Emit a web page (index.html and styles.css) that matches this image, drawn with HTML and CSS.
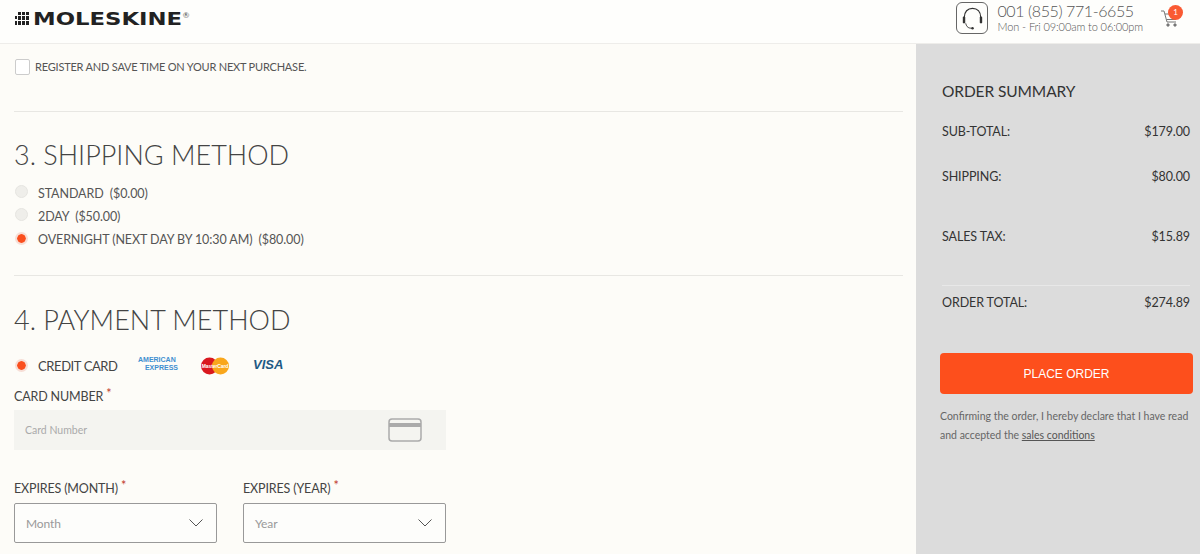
FILE: index.html
```html
<!DOCTYPE html>
<html lang="en">
<head>
    <meta charset="UTF-8">
    <title>Moleskine - Checkout</title>
    <link rel="stylesheet" href="styles.css">
</head>
<body>
    <header class="top-bar">
        <div class="logo">
            <svg class="logo-grid" width="14" height="13" viewBox="0 0 14 13">
                <g fill="#222">
                    <rect x="0" y="4" width="2" height="3"/><rect x="3" y="0" width="3" height="3"/><rect x="7" y="0" width="3" height="3"/><rect x="11" y="0" width="3" height="3"/>
                    <rect x="3" y="4" width="3" height="4"/><rect x="7" y="4" width="3" height="4"/><rect x="11" y="4" width="3" height="4"/>
                    <rect x="0" y="9" width="2" height="4"/><rect x="3" y="9" width="3" height="4"/><rect x="7" y="9" width="3" height="4"/><rect x="11" y="9" width="3" height="4"/>
                </g>
            </svg>
            <span class="logo-text">MOLESKINE</span><span class="logo-reg">®</span>
        </div>
        <div class="contact">
            <div class="headset-box">
                <svg width="31" height="31" viewBox="0 0 32 32" fill="none" stroke="#333">
                    <path d="M7.500 15 C7.500 9 11 5.500 16 5.500 C21 5.500 24.500 9 24.500 15" stroke-width="1.200"/>
                    <rect x="6" y="14" width="2.500" height="7" rx="1" fill="#333" stroke="none"/>
                    <rect x="23.500" y="14" width="2.500" height="7" rx="1" fill="#333" stroke="none"/>
                    <path d="M9 21 C10 25 12 26 15 26" stroke-width="1"/>
                    <circle cx="16" cy="26" r="1.300" fill="#333" stroke="none"/>
                </svg>
            </div>
            <div class="phone">
                <div class="phone-number">001 (855) 771-6655</div>
                <div class="phone-hours">Mon - Fri 09:00am to 06:00pm</div>
            </div>
            <div class="cart">
                <svg width="20" height="20" viewBox="0 0 20 20" fill="none" stroke="#777" stroke-width="1">
                    <path d="M1 3 H4 L7 14 H16"/>
                    <path d="M5 6 H17 L15.500 11.500 H6.500"/>
                    <circle cx="8" cy="17" r="1.200" fill="#777"/>
                    <circle cx="15" cy="17" r="1.200" fill="#777"/>
                </svg>
                <span class="cart-badge">1</span>
            </div>
        </div>
    </header>

    <div class="page">
        <main class="checkout">
            <label class="register">
                <span class="checkbox"></span>
                REGISTER AND SAVE TIME ON YOUR NEXT PURCHASE.
            </label>

            <section class="step shipping">
                <h2>3. SHIPPING METHOD</h2>
                <div class="radio-row"><span class="radio"></span>STANDARD&nbsp; ($0.00)</div>
                <div class="radio-row"><span class="radio"></span>2DAY&nbsp; ($50.00)</div>
                <div class="radio-row"><span class="radio selected"></span>OVERNIGHT (NEXT DAY BY 10:30 AM)&nbsp; ($80.00)</div>
            </section>

            <section class="step payment">
                <h2>4. PAYMENT METHOD</h2>
                <div class="card-row">
                    <span class="radio selected"></span>
                    <span class="card-label">CREDIT CARD</span>
                    <span class="amex"><span>AMERICAN</span><span class="amex-low">EXPRESS</span></span>
                    <span class="mastercard">
                        <svg width="30" height="18" viewBox="0 0 30 18">
                            <circle cx="9.500" cy="9" r="8.500" fill="#d9181f"/>
                            <circle cx="20.500" cy="9" r="8.500" fill="#f9a71c"/>
                            <text x="15" y="11" text-anchor="middle" class="mc-text">MasterCard</text>
                        </svg>
                    </span>
                    <span class="visa">VISA</span>
                </div>

                <div class="field-label">CARD NUMBER <span class="req">*</span></div>
                <div class="card-input">
                    <span>Card Number</span>
                    <svg width="34" height="24" viewBox="0 0 34 24" fill="none" stroke="#aaa" stroke-width="1.500">
                        <rect x="1" y="1" width="32" height="22" rx="3"/>
                        <rect x="1" y="5" width="32" height="4" fill="#aaa" stroke="none"/>
                    </svg>
                </div>

                <div class="expires">
                    <div class="expires-col">
                        <div class="field-label">EXPIRES (MONTH) <span class="req">*</span></div>
                        <div class="select-box">
                            <span>Month</span>
                            <svg width="14" height="8" viewBox="0 0 14 8" fill="none" stroke="#555" stroke-width="1"><path d="M0.500 0.500 L7 7 L13.500 0.500"/></svg>
                        </div>
                    </div>
                    <div class="expires-col">
                        <div class="field-label">EXPIRES (YEAR) <span class="req">*</span></div>
                        <div class="select-box">
                            <span>Year</span>
                            <svg width="14" height="8" viewBox="0 0 14 8" fill="none" stroke="#555" stroke-width="1"><path d="M0.500 0.500 L7 7 L13.500 0.500"/></svg>
                        </div>
                    </div>
                </div>
            </section>
        </main>

        <aside class="summary">
            <h3>ORDER SUMMARY</h3>
            <div class="sum-row subtotal"><span>SUB-TOTAL:</span><span>$179.00</span></div>
            <div class="sum-row ship"><span>SHIPPING:</span><span>$80.00</span></div>
            <div class="sum-row tax"><span>SALES TAX:</span><span>$15.89</span></div>
            <div class="sum-row total"><span>ORDER TOTAL:</span><span>$274.89</span></div>
            <button class="place-order">PLACE ORDER</button>
            <p class="terms">Confirming the order, I hereby declare that I have read and accepted the <a href="#">sales conditions</a></p>
        </aside>
    </div>
</body>
</html>
```

FILE: styles.css
```css
* {
    box-sizing: border-box;
}
html, body {
    height: 100%;
}
body {
    margin: 0;
    overflow: hidden;
    background: #fdfcf8;
    color: #444;
    font-family: Lato, "Open Sans", sans-serif;
    font-size: 12.5px;
    letter-spacing: -0.1px;
}

/* header */
.top-bar {
    display: flex;
    justify-content: space-between;
    height: 44px;
    padding: 0 20px 0 15px;
    background: #fefefc;
    border-bottom: 1px solid #eeedea;
}
.logo {
    display: flex;
    align-items: flex-start;
    padding-top: 10px;
}
.logo-grid {
    margin-top: 2px;
}
.logo-text {
    margin: 0 35px 0 4px;
    font-family: "DejaVu Sans", sans-serif;
    font-size: 17.5px;
    font-weight: bold;
    line-height: 18px;
    letter-spacing: 0;
    color: #222;
    transform: scaleX(1.3);
    transform-origin: left center;
}
.logo-reg {
    font-size: 8px;
    color: #555;
    line-height: 10px;
}
.contact {
    display: flex;
    align-items: flex-start;
}
.headset-box {
    width: 32px;
    height: 32px;
    margin-top: 2px;
    border: 1px solid #666;
    border-radius: 6px;
    overflow: hidden;
}
.headset-box svg {
    display: block;
}
.phone {
    margin-left: 9px;
    color: #555;
}
.phone-number {
    font-size: 16px;
    font-weight: 300;
    line-height: 20px;
    margin-top: 1px;
    letter-spacing: -0.4px;
}
.phone-hours {
    font-size: 11px;
    line-height: 12px;
    font-weight: 300;
}
.cart {
    position: relative;
    margin-left: 17px;
    padding-top: 8px;
}
.cart-badge {
    position: absolute;
    top: 5px;
    left: 8px;
    width: 15px;
    height: 15px;
    border-radius: 50%;
    background: #fa5a33;
    color: #fff;
    font-size: 8px;
    line-height: 15px;
    text-align: center;
}

/* columns */
.page {
    display: flex;
    height: 510px;
}
.checkout {
    width: 916px;
    padding: 14px 13px 0 14px;
}
.summary {
    width: 284px;
    padding: 37px 10px 0 26px;
    background: #dcdcdc;
}

.register {
    display: flex;
    align-items: center;
    height: 17px;
    font-size: 11px;
    letter-spacing: -0.2px;
    color: #555;
}
.checkbox {
    width: 15px;
    height: 16px;
    margin: 0 5px 0 1px;
    background: #fff;
    border: 1px solid #ccc;
    border-radius: 2px;
}
.step {
    border-top: 1px solid #e8e7e3;
}
.step h2 {
    margin: 0;
    font-size: 27px;
    font-weight: 300;
    line-height: 36px;
    letter-spacing: 0;
    color: #444;
}
.shipping {
    margin-top: 36px;
    padding-top: 25px;
    padding-bottom: 24px;
}
.shipping h2 {
    margin-bottom: 9px;
}
.radio-row {
    display: flex;
    align-items: center;
    height: 23px;
    color: #555;
}
.radio {
    flex: none;
    width: 13px;
    height: 13px;
    margin: 0 10px 4px 1px;
    border-radius: 50%;
    background: #efeeea;
    border: 1px solid #e6e5e1;
}
.radio.selected {
    margin-bottom: 2px;
    background: #fa4f1e;
    border: 2px solid #f7ded6;
    background-clip: padding-box;
}
.payment {
    padding-top: 26px;
}
.card-row {
    display: flex;
    align-items: center;
    height: 22px;
    margin-top: 17px;
    color: #444;
}
.card-label {
    width: 100px;
    font-size: 13px;
    letter-spacing: -0.4px;
}
.amex {
    display: flex;
    flex-direction: column;
    width: 40px;
    font-family: "Liberation Sans", sans-serif;
    font-size: 7px;
    font-weight: bold;
    line-height: 8px;
    letter-spacing: 0;
    color: #3f8fd0;
    margin-top: -4px;
}
.amex-low {
    align-self: flex-end;
}
.mastercard {
    display: flex;
    margin-left: 22px;
}
.mc-text {
    font-family: "Liberation Sans", sans-serif;
    font-size: 5px;
    font-weight: bold;
    fill: #fff;
}
.visa {
    margin-left: 23px;
    font-family: "Liberation Sans", sans-serif;
    font-size: 13px;
    font-style: italic;
    font-weight: bold;
    letter-spacing: 0;
    color: #1d5a85;
    margin-top: -4px;
}
.field-label {
    line-height: 18px;
    letter-spacing: -0.15px;
    color: #444;
}
.req {
    color: #c0392b;
    vertical-align: 3px;
}
.payment > .field-label {
    margin-top: 8px;
}
.card-input {
    display: flex;
    align-items: center;
    justify-content: space-between;
    width: 432px;
    height: 40px;
    margin-top: 4px;
    padding: 0 24px 0 11px;
    background: #f4f4f0;
    color: #aaa;
    font-size: 10.5px;
    letter-spacing: 0;
}
.expires {
    display: flex;
    gap: 26px;
    margin-top: 27px;
}
.expires-col {
    width: 203px;
}
.select-box {
    display: flex;
    align-items: center;
    justify-content: space-between;
    height: 40px;
    margin-top: 5px;
    padding: 0 13px 0 11px;
    background: #fdfdfb;
    border: 1px solid #999;
    border-radius: 2px;
    color: #999;
    font-size: 12px;
}

/* order summary */
.summary h3 {
    margin: 0 0 22px;
    font-size: 15.5px;
    font-weight: 400;
    line-height: 20px;
    letter-spacing: -0.1px;
    color: #333;
}
.sum-row {
    display: flex;
    justify-content: space-between;
    line-height: 18px;
    color: #333;
}
.ship {
    margin-top: 27px;
}
.tax {
    margin-top: 42px;
}
.total {
    margin-top: 39px;
    padding-top: 8px;
    border-top: 1px solid #e8e8e8;
}
.place-order {
    display: block;
    width: 253px;
    height: 41px;
    margin: 41px 0 0 -2px;
    border: 0;
    border-radius: 4px;
    background: #fd4f1c;
    color: #fff;
    font-family: "Liberation Sans", sans-serif;
    font-size: 12px;
}
.terms {
    margin: 13px 0 0 -2px;
    font-size: 10.5px;
    line-height: 19px;
    letter-spacing: 0;
    color: #666;
}
.terms a {
    color: #555;
}
```
